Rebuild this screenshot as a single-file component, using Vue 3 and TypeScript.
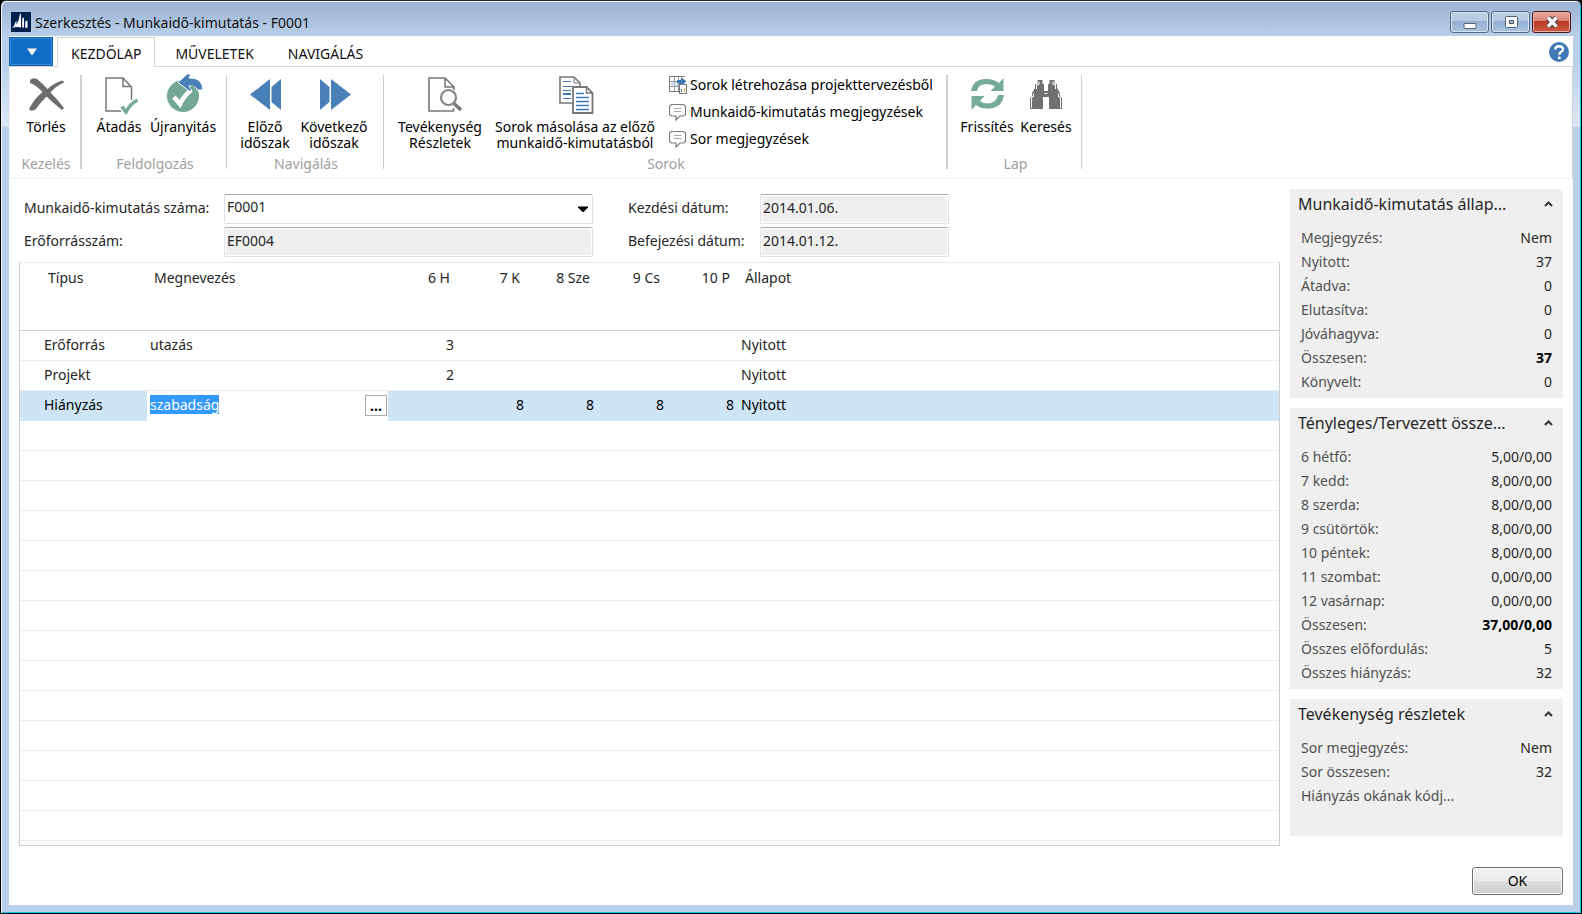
<script setup lang="ts">
import { onMounted, ref } from 'vue'

interface FactRow { label: string; value: string; strong?: boolean }
interface FactBox { title: string; rows: FactRow[]; spacer?: boolean }
interface Line { type: string; name: string; hours: string[]; state: string; active?: boolean }

const days = ['6 H', '7 K', '8 Sze', '9 Cs', '10 P']

const lines = ref<Line[]>([
  { type: 'Erőforrás', name: 'utazás', hours: ['3', '', '', '', ''], state: 'Nyitott' },
  { type: 'Projekt', name: '', hours: ['2', '', '', '', ''], state: 'Nyitott' },
  { type: 'Hiányzás', name: 'szabadság', hours: ['', '8', '8', '8', '8'], state: 'Nyitott', active: true },
])

const facts: FactBox[] = [
  {
    title: 'Munkaidő-kimutatás állap...',
    rows: [
      { label: 'Megjegyzés:', value: 'Nem' },
      { label: 'Nyitott:', value: '37' },
      { label: 'Átadva:', value: '0' },
      { label: 'Elutasítva:', value: '0' },
      { label: 'Jóváhagyva:', value: '0' },
      { label: 'Összesen:', value: '37', strong: true },
      { label: 'Könyvelt:', value: '0' },
    ],
  },
  {
    title: 'Tényleges/Tervezett össze...',
    rows: [
      { label: '6 hétfő:', value: '5,00/0,00' },
      { label: '7 kedd:', value: '8,00/0,00' },
      { label: '8 szerda:', value: '8,00/0,00' },
      { label: '9 csütörtök:', value: '8,00/0,00' },
      { label: '10 péntek:', value: '8,00/0,00' },
      { label: '11 szombat:', value: '0,00/0,00' },
      { label: '12 vasárnap:', value: '0,00/0,00' },
      { label: 'Összesen:', value: '37,00/0,00', strong: true },
      { label: 'Összes előfordulás:', value: '5' },
      { label: 'Összes hiányzás:', value: '32' },
    ],
  },
  {
    title: 'Tevékenység részletek',
    spacer: true,
    rows: [
      { label: 'Sor megjegyzés:', value: 'Nem' },
      { label: 'Sor összesen:', value: '32' },
      { label: 'Hiányzás okának kódj...', value: '' },
    ],
  },
]

const sheet = ref('F0001')
const closed = ref<boolean[]>([false, false, false])
const root = ref<HTMLElement | null>(null)

onMounted(() => {
  const edit = root.value?.querySelector<HTMLInputElement>('.edit-input')
  edit?.focus()
  edit?.select()
})
</script>

<template>
  <div ref="root" class="window">
    <header class="titlebar">
      <svg class="app-icon" viewBox="0 0 20 20" aria-hidden="true">
        <rect width="20" height="20" fill="#00204f" />
        <path d="M1 16 Q3.500 14 4.500 10 L5.500 9 V13 Q8 8 9 2 L10 1.500 V15.500 Q5 14.500 1 16 Z M11.200 15.500 V6.500 L13 5.500 V15.500 Z M14.200 15.500 V9.500 L16.500 8.500 V16 Z" fill="#fff" />
      </svg>
      <h1>Szerkesztés - Munkaidő-kimutatás - F0001</h1>
      <div class="win-buttons">
        <button type="button" class="win-btn" aria-label="Kis méret">
          <svg viewBox="0 0 20 16"><rect x="4" y="9.500" width="12" height="5" rx="1" fill="#fff" stroke="#53606f" /></svg>
        </button>
        <button type="button" class="win-btn" aria-label="Teljes méret">
          <svg viewBox="0 0 20 16"><rect x="4.500" y="2.500" width="12" height="11" rx="1" fill="#f6f8fa" stroke="#53606f" /><rect x="8.500" y="6.500" width="4" height="3" fill="#9fb9d6" stroke="#53606f" /></svg>
        </button>
        <button type="button" class="win-btn close" aria-label="Bezárás">
          <svg viewBox="0 0 20 16"><path d="M6 3.500 L14.500 12.500 M14.500 3.500 L6 12.500" stroke="#4b3a48" stroke-width="5.500" /><path d="M6 3.500 L14.500 12.500 M14.500 3.500 L6 12.500" stroke="#f5f5f5" stroke-width="3.500" /></svg>
        </button>
      </div>
    </header>

    <main class="client">
      <nav class="tabs">
        <button type="button" class="app-menu" aria-label="Alkalmazás menü">
          <svg viewBox="0 0 10 8"><path d="M0 0.500 H10 L5 7.500 Z" fill="#fff" /></svg>
        </button>
        <button type="button" class="tab current">KEZDŐLAP</button>
        <button type="button" class="tab">MŰVELETEK</button>
        <button type="button" class="tab">NAVIGÁLÁS</button>
        <button type="button" class="help" aria-label="Súgó">
          <svg viewBox="0 0 20 20"><circle cx="10" cy="10" r="10" fill="#4179b4" /><path d="M6.200 7.500 Q6.200 4.200 10 4.200 Q14 4.200 14 7.200 Q14 9 12 10 Q10.300 10.900 10.300 12.800" fill="none" stroke="#fff" stroke-width="2.400" /><rect x="9" y="14.600" width="2.600" height="2.600" fill="#fff" /></svg>
        </button>
      </nav>

      <div class="ribbon">
        <section class="group g-manage">
          <div class="commands">
            <button type="button" class="big">
              <svg class="ico" viewBox="0 0 40 40"><path d="M4 5 Q7 2 11 4 Q16 8 21.500 14 Q29 7 37 5.500 L38 7.500 Q30 11 24.500 17.500 Q31 24 38 33 L36 35 Q27 28 20.500 21.500 Q14 28 9.500 34.500 Q5 37 3 34 Q8 24 16.500 17 Q10 10 4 8 Z" fill="#6d6d6d" /></svg>
              <span>Törlés</span>
            </button>
          </div>
          <h2>Kezelés</h2>
        </section>

        <section class="group g-process">
          <div class="commands">
            <button type="button" class="big">
              <svg class="ico" viewBox="0 0 40 40" fill="none"><path d="M22 36 H7 V3 H24 L32.500 12 V25 M24 3 V11.500 H32" stroke="#777" stroke-width="1.500" /><path d="M23 31.500 L27 37 Q31 29 38.500 25" stroke="#76ab98" stroke-width="3.500" /></svg>
              <span>Átadás</span>
            </button>
            <button type="button" class="big">
              <svg class="ico" viewBox="0 0 40 40"><circle cx="20" cy="21" r="16" fill="#74a895" /><path d="M11 22 L17 29 Q20 22 28 15" fill="none" stroke="#fff" stroke-width="4.500" /><path d="M15 7.500 L24 -1 H28 L26 3 Q39 2 40 15 H34 Q33 10.500 26 11 L29 16 H26 Z" fill="#4a80b8" stroke="#fff" stroke-width="1" /><path d="M27 13 L29.500 11.500 L32 14" fill="none" stroke="#74a895" stroke-width="2" /></svg>
              <span>Újranyitás</span>
            </button>
          </div>
          <h2>Feldolgozás</h2>
        </section>

        <section class="group g-nav">
          <div class="commands">
            <button type="button" class="big">
              <svg class="ico" viewBox="0 0 40 40" fill="#4a80b8"><path d="M5 19.500 L25 4 V35 Z M26.500 12 L36 4 V35 L26.500 27 Z" /></svg>
              <span>Előző<br />időszak</span>
            </button>
            <button type="button" class="big">
              <svg class="ico" viewBox="0 0 40 40" fill="#4a80b8"><path d="M6 4 L15.500 12 V27 L6 35 Z M17 4 L37 19.500 L17 35 Z" /></svg>
              <span>Következő<br />időszak</span>
            </button>
          </div>
          <h2>Navigálás</h2>
        </section>

        <section class="group g-lines">
          <div class="commands">
            <button type="button" class="big">
              <svg class="ico" viewBox="0 0 40 40" fill="none"><path d="M33.500 33 V36 H9 V3 H25 L34 12 V15 M25 3 V12 H34" stroke="#777" stroke-width="1.600" /><circle cx="28.500" cy="22.500" r="7.500" stroke="#858585" stroke-width="2.200" fill="#fff" /><path d="M34 28.500 L41 35" stroke="#777" stroke-width="3.500" /></svg>
              <span>Tevékenység<br />Részletek</span>
            </button>
            <button type="button" class="big">
              <svg class="ico" viewBox="0 0 40 40"><path d="M17 28 H5 V2 H19 L25 8 V11" fill="#fff" stroke="#777" stroke-width="1.600" /><path d="M19 2 V8 H25" fill="none" stroke="#777" /><path d="M8 6.500 H16 M8 11.500 H17 M8 15.500 H16 M8 23.500 H16" stroke="#4179b4" stroke-width="1.200" /><path d="M8 19 H16" stroke="#4179b4" stroke-width="2" /><path d="M18 12 H31.500 L37.500 18 V38 H18 Z" fill="#fff" stroke="#777" stroke-width="1.800" /><path d="M31.500 12 V18 H37.500" fill="none" stroke="#777" stroke-width="1.300" /><path d="M21 18.500 H29 M21 22.500 H34 M21 26.500 H34 M21 30.500 H34 M21 34.500 H34" stroke="#4179b4" stroke-width="1.300" /></svg>
              <span>Sorok másolása az előző<br />munkaidő-kimutatásból</span>
            </button>
            <div class="small-list">
              <button type="button" class="small">
                <svg viewBox="0 0 18 18"><path d="M10 15.500 H0.500 V0.500 H16" fill="none" stroke="#777" /><path d="M1 5.500 H10 M1 10.500 H10 M5.500 1 V15 M9.500 1 V15" stroke="#999" /><rect x="2" y="6" width="7" height="4" fill="#c3d5e8" opacity=".7" /><path d="M8 4 H12 V1 L17.500 5.500 L12 10 V7 H8 Z" fill="#4179b4" /><rect x="10.500" y="8.500" width="7" height="9" fill="#fff" stroke="#777" /><path d="M10 6 H15 V8 H10 Z" fill="#4179b4" /><path d="M12.500 13 V16" stroke="#4179b4" /><path d="M15.500 12 V16" stroke="#e8a33b" /></svg>
                <span>Sorok létrehozása projekttervezésből</span>
              </button>
              <button type="button" class="small">
                <svg viewBox="0 0 18 18"><path d="M2.500 1.500 H14.500 L16.500 3 V11.500 L14.500 13 H11 L7 17 V13 H2.500 L0.500 11.500 V3 Z" fill="#fff" stroke="#7c7c7c" stroke-width="1.200" /><path d="M5 5.500 H12.500 M5 8.500 H12.500" stroke="#a8a8a8" /></svg>
                <span>Munkaidő-kimutatás megjegyzések</span>
              </button>
              <button type="button" class="small">
                <svg viewBox="0 0 18 18"><path d="M2.500 1.500 H14.500 L16.500 3 V11.500 L14.500 13 H11 L7 17 V13 H2.500 L0.500 11.500 V3 Z" fill="#fff" stroke="#7c7c7c" stroke-width="1.200" /><path d="M5 5.500 H12.500 M5 8.500 H12.500" stroke="#a8a8a8" /></svg>
                <span>Sor megjegyzések</span>
              </button>
            </div>
          </div>
          <h2>Sorok</h2>
        </section>

        <section class="group g-page">
          <div class="commands">
            <button type="button" class="big">
              <svg class="ico" viewBox="0 0 40 40" fill="#76ab98"><path d="M4 16 Q6 4 19 4 Q27 4 32 8 L36.500 3 V16 H23.500 L28 11.500 Q25 9 20 9 Q11 9 10 16 Z" /><path d="M37 20 Q35 33 22 33.500 Q14 34 9 30 L4.500 35 V21 H17.500 L13 26 Q16 28.500 21 28.500 Q29 28 31 20 Z" /></svg>
              <span>Frissítés</span>
            </button>
            <button type="button" class="big">
              <svg class="ico" viewBox="0 0 40 40"><path d="M11.500 5 H16.500 V9 H18 V16 H22 V9 H23.500 V5 H28.500 V9 H31 V13 L34 18 V21 L36 23 V34 H23 V22 H17 V34 H4 V23 L6 21 V18 L9 13 V9 H11.500 Z" fill="#707070" /><path d="M13 6.500 V9.500 H10.500 V14 M7.500 18.500 V22 H5.500 V33 M27 6.500 V9.500 H29.500 V14 M32.500 18.500 V22 H34.500 V33" fill="none" stroke="#fff" stroke-width="1" /><path d="M18.500 18.500 H21.500" stroke="#fff" /></svg>
              <span>Keresés</span>
            </button>
          </div>
          <h2>Lap</h2>
        </section>
      </div>

      <div class="body">
        <div class="work">
          <form class="fields" @submit.prevent>
            <label for="sheet">Munkaidő-kimutatás száma:</label>
            <div class="picker">
              <select id="sheet" v-model="sheet" class="field">
                <option>F0001</option>
              </select>
              <svg viewBox="0 0 10 6" aria-hidden="true"><path d="M0 0.500 H10 V1.500 L5.500 6 H4.500 L0 1.500 Z" fill="#000" /></svg>
            </div>
            <label for="start" class="second">Kezdési dátum:</label>
            <input id="start" class="field locked" value="2014.01.06." readonly />
            <label for="resource">Erőforrásszám:</label>
            <input id="resource" class="field locked" value="EF0004" readonly />
            <label for="end" class="second">Befejezési dátum:</label>
            <input id="end" class="field locked" value="2014.01.12." readonly />
          </form>

          <div class="grid-box">
            <table class="grid">
              <colgroup>
                <col class="c-type" /><col class="c-name" />
                <col v-for="d in days" :key="d" class="c-day" />
                <col />
              </colgroup>
              <thead>
                <tr>
                  <th scope="col" class="type">Típus</th>
                  <th scope="col">Megnevezés</th>
                  <th v-for="d in days" :key="d" scope="col" class="num">{{ d }}</th>
                  <th scope="col">Állapot</th>
                </tr>
              </thead>
              <tbody>
                <tr v-for="line in lines" :key="line.type" :class="{ active: line.active }">
                  <td class="type">{{ line.type }}</td>
                  <td v-if="line.active" class="editing">
                    <div class="editor">
                      <input v-model="line.name" class="edit-input" aria-label="Megnevezés" />
                      <button type="button" class="lookup" aria-label="Keresés a listában">...</button>
                    </div>
                  </td>
                  <td v-else>{{ line.name }}</td>
                  <td v-for="(h, i) in line.hours" :key="i" class="num">{{ h }}</td>
                  <td>{{ line.state }}</td>
                </tr>
              </tbody>
            </table>
            <div class="blank-lines"></div>
          </div>
        </div>

        <aside class="facts">
          <section v-for="(box, i) in facts" :key="box.title" class="fact" :class="{ spacer: box.spacer }">
            <h2>
              <span>{{ box.title }}</span>
              <button type="button" aria-label="Összecsukás" @click="closed[i] = !closed[i]">
                <svg viewBox="0 0 9 6"><path d="M1 5 L4.500 1.500 L8 5" fill="none" stroke="#333" stroke-width="2" /></svg>
              </button>
            </h2>
            <dl v-if="!closed[i]">
              <div v-for="row in box.rows" :key="row.label">
                <dt>{{ row.label }}</dt>
                <dd :class="{ strong: row.strong }">{{ row.value }}</dd>
              </div>
            </dl>
          </section>
        </aside>
      </div>

      <footer class="footer">
        <button type="button" class="ok">OK</button>
      </footer>
    </main>
  </div>
</template>

<style>
body {
  background: #000;
}
</style>

<style scoped>
* {
  box-sizing: border-box;
}

.window {
  display: flex;
  flex-direction: column;
  min-height: 100vh;
  padding: 1px 8px 8px;
  border: 1px solid #000;
  border-top-color: #2a2a33;
  border-radius: 6px 6px 0 0;
  background:
    linear-gradient(#9ab3d2, #b9d0ea 36px, #b9d0ea 60px, #dce8f6 125px, #b9d1ea 126px);
  box-shadow: inset 1px 1px 0 #eef4fb, inset -1px -1px 0 #29c5e6;
  color: #262626;
  font: 14px/20px "Segoe UI", "Noto Sans", "Open Sans", sans-serif;
}

button,
input,
select {
  margin: 0;
  padding: 0;
  border: 0;
  border-radius: 0;
  background: none;
  color: inherit;
  font: inherit;
}

svg {
  display: block;
}

h1,
h2,
dl,
dd {
  margin: 0;
  font-weight: 400;
}

/* title bar */
.titlebar {
  display: flex;
  align-items: center;
  height: 34px;
  padding: 6px 2px 0;
}

.app-icon {
  width: 20px;
  height: 20px;
  margin-right: 4px;
}

.titlebar h1 {
  flex: 1;
  padding-top: 1px;
  color: #111;
  font-size: 14px;
  line-height: 20px;
}

.win-buttons {
  display: flex;
  gap: 2px;
}

.win-btn {
  display: grid;
  place-items: center;
  width: 39px;
  height: 22px;
  border: 1px solid #566a86;
  border-radius: 3px;
  background: linear-gradient(#bdd0e6, #b3cae3 45%, #94b0d0 46%, #abc5e1);
  box-shadow: inset 0 0 0 1px #d6e4f2;
}

.win-btn svg {
  width: 20px;
  height: 16px;
}

.win-btn.close {
  border-color: #4f1622;
  background: linear-gradient(#e9a99e, #d98375 45%, #b93b26 46%, #cd5a42);
  box-shadow: inset 0 0 0 1px #e7b1a6;
}

/* client area */
.client {
  display: flex;
  flex: 1;
  flex-direction: column;
  background: #fff;
}

.tabs {
  display: flex;
  height: 31px;
  padding-top: 1px;
  border-bottom: 1px solid #d4d4d4;
}

.app-menu {
  display: grid;
  place-items: center;
  width: 44px;
  height: 29px;
  margin-right: 4px;
  padding-left: 2px;
  border: 1px solid #0a5cb0;
  background: #0f6fc6;
  box-shadow: inset 0 0 0 1px #3b8ad4;
}

.app-menu svg {
  width: 10px;
  height: 8px;
}

.tab {
  height: 30px;
  padding: 2px 13px 0;
  border: 1px solid transparent;
  border-bottom: 0;
  color: #111;
}

.tab + .tab {
  margin-left: 6px;
}

.tab.current {
  margin: 0 0 -1px;
  border-color: #d4d4d4;
  background: #fff;
}

.help {
  width: 20px;
  height: 20px;
  margin: 5px 4px 0 auto;
}

/* ribbon */
.ribbon {
  display: flex;
  height: 112px;
  padding-top: 8px;
  border: 1px solid #f0f0f0;
  border-top: 0;
  border-right-color: #d4d4d4;
}

.group {
  display: flex;
  flex-direction: column;
  height: 94px;
  border-right: 1px solid #d0d0d0;
}

.group h2 {
  margin-top: auto;
  margin-bottom: -5px;
  padding-left: 2px;
  color: #a0a0a0;
  font-size: 14px;
  line-height: 20px;
  text-align: center;
}

.commands {
  display: flex;
}

.big {
  display: flex;
  flex-direction: column;
  align-items: center;
  gap: 4px;
  flex: none;
  color: #000;
  line-height: 16px;
  white-space: nowrap;
}

.ico {
  width: 40px;
  height: 40px;
  overflow: visible;
}

.g-manage {
  width: 72px;
  border-right-width: 2px;
}
.g-manage .commands { padding-left: 2px; }
.g-manage .big { width: 68px; }

.g-process { width: 145px; }
.g-process .commands { padding-left: 11px; }
.g-process .big { width: 52px; }
.g-process .big + .big { width: 76px; }

.g-nav { width: 157px; }
.g-nav .commands { padding-left: 11px; }
.g-nav .big { width: 54px; }
.g-nav .big + .big { width: 84px; }

.g-lines {
  width: 564px;
  border-right-width: 2px;
}
.g-lines .commands { padding-left: 10px; }
.g-lines .big { width: 92px; }
.g-lines .big + .big { width: 178px; }

.g-page { width: 134px; }
.g-page .commands { padding-left: 9px; }
.g-page .big { width: 60px; }
.g-page .big + .big { width: 58px; }

.small-list {
  display: flex;
  flex-direction: column;
  margin: -4px 0 -4px 5px;
}

.small {
  display: flex;
  align-items: center;
  gap: 3px;
  height: 27px;
  color: #000;
  white-space: nowrap;
}

.small svg {
  width: 18px;
  height: 18px;
}

/* work area */
.body {
  display: flex;
  flex: 1;
  gap: 10px;
  padding: 10px 10px 0;
}

.work {
  display: flex;
  flex: 1;
  flex-direction: column;
  min-width: 0;
  padding-top: 5px;
}

.fields {
  display: grid;
  grid-template-columns: 200px 369px 167px 189px;
  row-gap: 3px;
  padding-left: 5px;
}

.fields label {
  padding-top: 4px;
  white-space: nowrap;
}

.fields .second {
  padding-left: 35px;
}

.field {
  width: 100%;
  height: 30px;
  padding: 0 3px 4px 2px;
  border: 1px solid #dfe0ea;
  border-top-color: #abaab5;
  border-radius: 2px;
  background: #fff;
  appearance: none;
  outline: none;
}

.field.locked {
  background: #efefef;
  box-shadow: inset 0 0 0 1px #fff;
}

.picker {
  position: relative;
}

.picker svg {
  position: absolute;
  top: 12px;
  right: 5px;
  width: 10px;
  height: 6px;
  pointer-events: none;
}

.grid-box {
  display: flex;
  flex: 1;
  flex-direction: column;
  margin-top: 5px;
  border: 1px solid #cfcfcf;
  border-top-color: #ececec;
}

.grid {
  width: 100%;
  border-collapse: separate;
  border-spacing: 0;
  table-layout: fixed;
}

.c-type { width: 127px; }
.c-name { width: 241px; }
.c-day { width: 70px; }

.grid th {
  height: 68px;
  padding: 5px 8px 0 7px;
  border-bottom: 1px solid #cfcfcf;
  font-weight: 400;
  text-align: left;
  vertical-align: top;
}

.grid td {
  height: 30px;
  padding: 0 4px 2px 3px;
  border-bottom: 1px solid #ececec;
}

.grid th.type { padding-left: 28px; }
.grid td.type { padding-left: 24px; }

.grid th.num,
.grid td.num {
  padding-left: 0;
  text-align: right;
}

.grid .active td {
  border-bottom-color: #cde5f7;
  background: #cde5f7;
  color: #000;
}

.grid .active td.editing {
  padding: 0 1px 0 3px;
  border-bottom-color: #fff;
  background: #fff;
}

.editor {
  display: flex;
  align-items: center;
}

.edit-input {
  flex: 1;
  min-width: 0;
  height: 22px;
  padding-bottom: 2px;
  outline: none;
  caret-color: transparent;
}

.edit-input::selection {
  background: #3399ff;
  color: #fff;
}

.lookup {
  width: 22px;
  height: 21px;
  border: 1px solid #acacac;
  background: #fff;
  font-weight: 700;
  line-height: 18px;
}

.blank-lines {
  flex: 1;
  background: repeating-linear-gradient(#fff 0 29px, #ececec 29px 30px);
}

/* fact boxes */
.facts {
  display: flex;
  flex: none;
  flex-direction: column;
  gap: 10px;
  width: 273px;
}

.fact {
  padding: 0 11px 4px;
  background: #efefef;
}

.fact.spacer {
  padding-bottom: 28px;
}

.fact h2 {
  display: flex;
  align-items: center;
  justify-content: space-between;
  height: 30px;
  margin: 0 -1px 7px -3px;
  color: #262626;
  font-size: 16px;
  white-space: nowrap;
}

.fact h2 svg {
  width: 9px;
  height: 6px;
}

.fact dl > div {
  display: flex;
  justify-content: space-between;
  line-height: 24px;
}

.fact dt {
  color: #505050;
}

.fact dd.strong {
  color: #000;
  font-weight: 700;
}

/* footer */
.footer {
  display: flex;
  justify-content: flex-end;
  padding: 21px 10px 10px;
}

.ok {
  width: 91px;
  height: 28px;
  border: 1px solid #707070;
  border-radius: 3px;
  background: linear-gradient(#f2f2f2, #ebebeb 48%, #dddddd 50%, #cfcfcf);
  box-shadow: inset 0 0 0 1px #fbfbfb;
  color: #000;
}
</style>
